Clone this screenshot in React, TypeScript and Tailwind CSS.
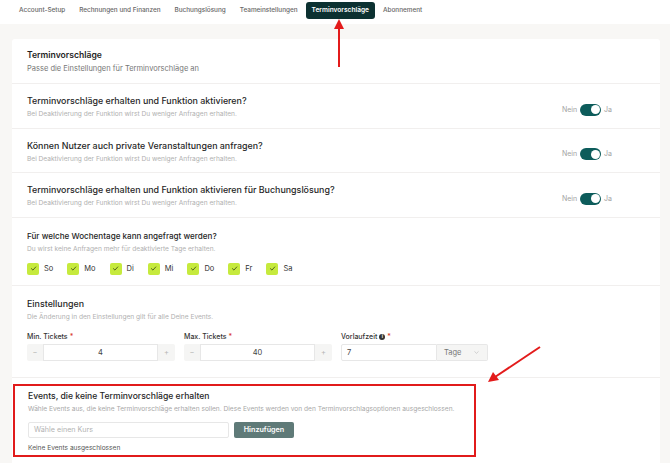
import React from 'react';

const TABS = ['Account-Setup', 'Rechnungen und Finanzen', 'Buchungslösung', 'Teameinstellungen', 'Terminvorschläge', 'Abonnement'];
const DAYS = ['So', 'Mo', 'Di', 'Mi', 'Do', 'Fr', 'Sa'];
const SUB = 'Bei Deaktivierung der Funktion wirst Du weniger Anfragen erhalten.';

const Toggle = () => (
  <div className="flex items-center gap-[3px] text-[7px] text-[#a3a3a3]">
    <span>Nein</span>
    <span className="w-[21px] h-[12px] rounded-full bg-[#0d5c5b] flex items-center justify-end px-[1.5px]">
      <span className="w-[9px] h-[9px] rounded-full bg-white" />
    </span>
    <span>Ja</span>
  </div>
);

const ToggleRow = ({ title }: { title: string }) => (
  <div className="h-[44.5px] flex items-center justify-between border-b border-[#f1efee] pl-[15px] pr-[48px]">
    <div className="flex flex-col gap-[3px] mt-[3px]">
      <div className="text-[8.9px] font-medium text-[#262626]">{title}</div>
      <div className="text-[6.6px] text-[#b0b0b0]">{SUB}</div>
    </div>
    <div className="mt-[8px]">
      <Toggle />
    </div>
  </div>
);

const Check = ({ label }: { label: string }) => (
  <div className="flex items-center gap-[5px]">
    <span className="w-[12px] h-[12px] rounded-[2px] bg-[#c6ea3d] flex items-center justify-center">
      <svg width="7" height="7" viewBox="0 0 10 10" fill="none">
        <path d="M2 5.2 L4.2 7.3 L8.2 2.8" stroke="#3c4a1a" strokeWidth="1.2" strokeLinecap="round" strokeLinejoin="round" />
      </svg>
    </span>
    <span className="text-[7.5px] text-[#333]">{label}</span>
  </div>
);

const Stepper = ({ value }: { value: string }) => (
  <div className="flex h-[17px] w-[148px] text-[7.5px]">
    <button className="w-[16px] bg-[#f5f5f4] text-[#b5b5b5] rounded-l-[2px] flex items-center justify-center">−</button>
    <div className="flex-1 border border-[#e7e7e7] flex items-center justify-center text-[#444]">{value}</div>
    <button className="w-[17px] bg-[#f5f5f4] text-[#b5b5b5] rounded-r-[2px] flex items-center justify-center">+</button>
  </div>
);

const Label = ({ text, info }: { text: string; info?: boolean }) => (
  <div className="flex items-center gap-[2px] text-[7px] font-medium text-[#333] mb-[2px]">
    <span>{text}</span>
    {info && (
      <span className="w-[6px] h-[6px] rounded-full bg-[#333] text-white text-[4.5px] font-bold flex items-center justify-center">i</span>
    )}
    <span className="text-[#d83a2a]">*</span>
  </div>
);

export default function App() {
  return (
    <div className="relative w-full h-[463px] overflow-hidden bg-[#f8f7f5] font-['Inter','Noto_Sans',sans-serif]">
      <div className="h-[24px] bg-white flex items-start pt-[2px] pl-[13px] gap-[2px]">
        {TABS.map(t => (
          <div
            key={t}
            className={
              t === 'Terminvorschläge'
                ? 'h-[17px] px-[6px] rounded-[3px] bg-[#0c3131] text-white font-semibold text-[6.6px] flex items-center'
                : 'h-[17px] px-[6px] text-[#666] text-[6.4px] font-medium flex items-center'
            }
          >
            {t}
          </div>
        ))}
      </div>

      <div className="mt-[15px] ml-[12px] mr-[10px] bg-white rounded-t-[3px]">
        <div className="h-[45px] border-b border-[#f1efee] pl-[15px] pt-[10px] flex flex-col gap-[1px]">
          <div className="text-[8.6px] font-semibold text-[#1e1e1e]">Terminvorschläge</div>
          <div className="text-[7.5px] text-[#777]">Passe die Einstellungen für Terminvorschläge an</div>
        </div>

        <ToggleRow title="Terminvorschläge erhalten und Funktion aktivieren?" />
        <ToggleRow title="Können Nutzer auch private Veranstaltungen anfragen?" />
        <ToggleRow title="Terminvorschläge erhalten und Funktion aktivieren für Buchungslösung?" />

        <div className="h-[68px] border-b border-[#f1efee] pl-[15px] pt-[12px]">
          <div className="text-[8.1px] font-medium text-[#262626]">Für welche Wochentage kann angefragt werden?</div>
          <div className="text-[6.6px] text-[#b0b0b0] mt-[3px]">Du wirst keine Anfragen mehr für deaktivierte Tage erhalten.</div>
          <div className="flex gap-[14px] mt-[8px]">
            {DAYS.map(d => (
              <Check key={d} label={d} />
            ))}
          </div>
        </div>

        <div className="h-[92px] border-b border-[#f1efee] pl-[15px] pt-[11px]">
          <div className="text-[8.9px] font-medium text-[#262626]">Einstellungen</div>
          <div className="text-[6.6px] text-[#b0b0b0] mt-[3px]">Die Änderung in den Einstellungen gilt für alle Deine Events.</div>
          <div className="flex gap-[9px] mt-[9px]">
            <div>
              <Label text="Min. Tickets" />
              <Stepper value="4" />
            </div>
            <div>
              <Label text="Max. Tickets" />
              <Stepper value="40" />
            </div>
            <div>
              <Label text="Vorlaufzeit" info />
              <div className="flex h-[17px] w-[147px] text-[7.5px]">
                <div className="w-[96px] border border-[#e7e7e7] rounded-l-[2px] flex items-center px-[5px] text-[#444]">7</div>
                <div className="flex-1 bg-[#f5f5f4] border border-l-0 border-[#e7e7e7] rounded-r-[2px] flex items-center justify-between px-[7px] text-[#777]">
                  <span>Tage</span>
                  <svg width="7" height="7" viewBox="0 0 10 10" fill="none">
                    <path d="M2.5 3.8 L5 6.2 L7.5 3.8" stroke="#b9b9b9" strokeWidth="0.9" strokeLinecap="round" strokeLinejoin="round" />
                  </svg>
                </div>
              </div>
            </div>
          </div>
        </div>

        <div className="pt-[6px] pl-[1px] h-[90px]">
          <div className="w-[463px] h-[73px] border-2 border-[#e11b1b] pl-[13px] pt-[4px]">
            <div className="text-[8.6px] font-medium text-[#262626]">Events, die keine Terminvorschläge erhalten</div>
            <div className="text-[6.6px] text-[#a8a8a8] mt-[3px]">
              Wähle Events aus, die keine Terminvorschläge erhalten sollen. Diese Events werden von den Terminvorschlagsoptionen ausgeschlossen.
            </div>
            <div className="flex items-center gap-[5px] mt-[7px]">
              <div className="w-[201px] h-[16px] border border-[#e7e7e7] rounded-[2px] flex items-center px-[5px] text-[7.2px] text-[#b3b3b3]">
                Wähle einen Kurs
              </div>
              <button className="w-[60px] h-[16px] rounded-[2px] bg-[#5f7a78] text-white text-[7.2px] font-semibold flex items-center justify-center">
                Hinzufügen
              </button>
            </div>
            <div className="text-[6.6px] text-[#555] mt-[6px]">Keine Events ausgeschlossen</div>
          </div>
        </div>
      </div>

      <svg className="absolute inset-0 pointer-events-none" width="670" height="463" viewBox="0 0 670 463">
        <line x1="339" y1="67" x2="339" y2="27" stroke="#e31b1b" strokeWidth="2" />
        <polygon points="339,19 334,29 344,29" fill="#e31b1b" />
        <line x1="540" y1="347" x2="495" y2="377" stroke="#e31b1b" strokeWidth="2" />
        <polygon points="488,382 493,372 499,380" fill="#e31b1b" />
      </svg>
    </div>
  );
}
